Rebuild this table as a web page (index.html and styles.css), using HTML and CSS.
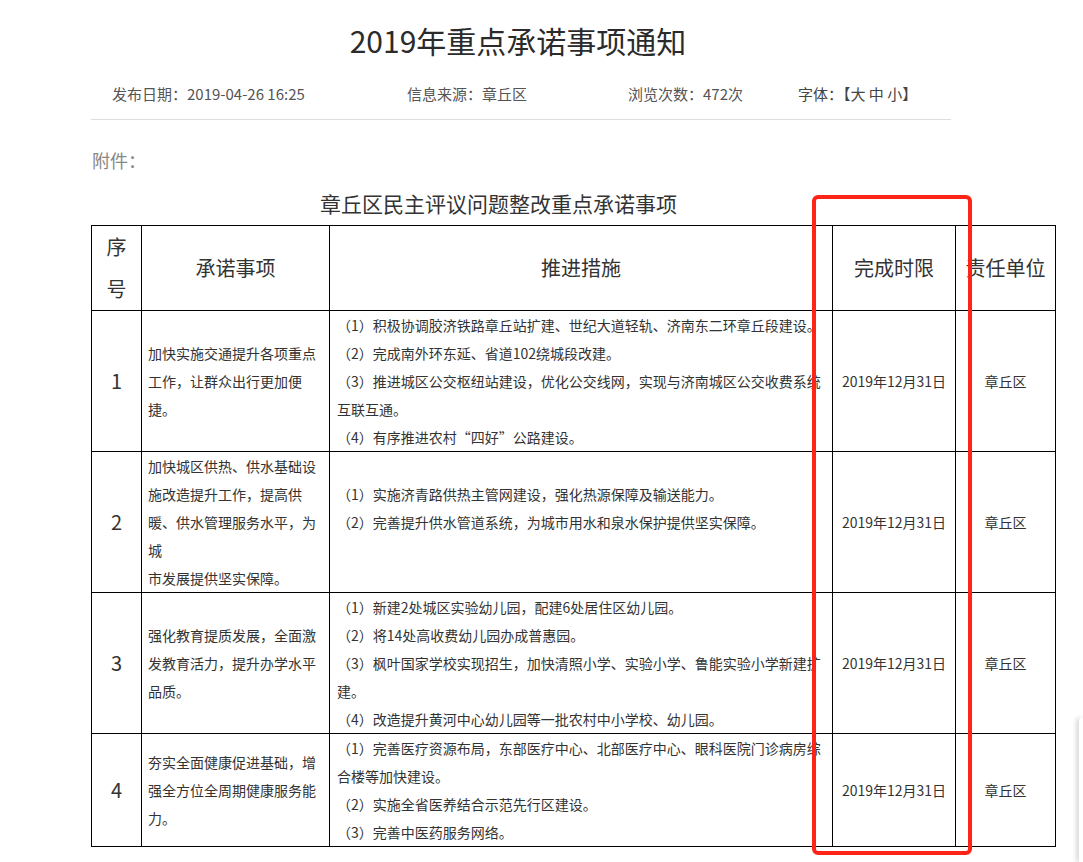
FILE: index.html
```html
<!DOCTYPE html>
<html lang="zh-CN">
<head>
<meta charset="utf-8">
<title>2019年重点承诺事项通知</title>
<link rel="stylesheet" href="styles.css">
</head>
<body>
<div class="page">
  <h1 class="title">2019年重点承诺事项通知</h1>
  <div class="meta">
    <span class="meta-item m-date">发布日期：2019-04-26 16:25</span>
    <span class="meta-item m-source">信息来源：章丘区</span>
    <span class="meta-item m-views">浏览次数：472次</span>
    <span class="meta-item m-font">字体：【大 中 小】</span>
  </div>
  <p class="attach">附件：</p>
  <p class="table-title">章丘区民主评议问题整改重点承诺事项</p>
  <table class="grid">
    <colgroup>
      <col class="c1"><col class="c2"><col class="c3"><col class="c4"><col class="c5">
    </colgroup>
    <thead>
      <tr class="head">
        <th class="seq-head">序<br>号</th>
        <th>承诺事项</th>
        <th>推进措施</th>
        <th>完成时限</th>
        <th>责任单位</th>
      </tr>
    </thead>
    <tbody>
      <tr>
        <td class="num">1</td>
        <td class="item">加快实施交通提升各项重点<br>工作，让群众出行更加便<br>捷。</td>
        <td class="measure">（1）积极协调胶济铁路章丘站扩建、世纪大道轻轨、济南东二环章丘段建设。<br>（2）完成南外环东延、省道102绕城段改建。<br>（3）推进城区公交枢纽站建设，优化公交线网，实现与济南城区公交收费系统<br>互联互通。<br>（4）有序推进农村“四好”公路建设。</td>
        <td class="date">2019年12月31日</td>
        <td class="unit">章丘区</td>
      </tr>
      <tr>
        <td class="num">2</td>
        <td class="item">加快城区供热、供水基础设<br>施改造提升工作，提高供<br>暖、供水管理服务水平，为<br>城<br>市发展提供坚实保障。</td>
        <td class="measure">（1）实施济青路供热主管网建设，强化热源保障及输送能力。<br>（2）完善提升供水管道系统，为城市用水和泉水保护提供坚实保障。<br>&nbsp;</td>
        <td class="date">2019年12月31日</td>
        <td class="unit">章丘区</td>
      </tr>
      <tr>
        <td class="num">3</td>
        <td class="item">强化教育提质发展，全面激<br>发教育活力，提升办学水平<br>品质。</td>
        <td class="measure">（1）新建2处城区实验幼儿园，配建6处居住区幼儿园。<br>（2）将14处高收费幼儿园办成普惠园。<br>（3）枫叶国家学校实现招生，加快清照小学、实验小学、鲁能实验小学新建扩<br>建。<br>（4）改造提升黄河中心幼儿园等一批农村中小学校、幼儿园。</td>
        <td class="date">2019年12月31日</td>
        <td class="unit">章丘区</td>
      </tr>
      <tr>
        <td class="num">4</td>
        <td class="item">夯实全面健康促进基础，增<br>强全方位全周期健康服务能<br>力。</td>
        <td class="measure">（1）完善医疗资源布局，东部医疗中心、北部医疗中心、眼科医院门诊病房综<br>合楼等加快建设。<br>（2）实施全省医养结合示范先行区建设。<br>（3）完善中医药服务网络。</td>
        <td class="date">2019年12月31日</td>
        <td class="unit">章丘区</td>
      </tr>
    </tbody>
  </table>
</div>
<div class="highlight"></div>
<div class="float-panel"></div>
</body>
</html>
```

FILE: styles.css
```css
html, body {
  margin: 0;
  padding: 0;
  overflow: hidden;
  background: #fff;
}
body {
  font-family: "Noto Sans CJK SC", "Noto Sans", sans-serif;
  color: #333;
  position: relative;
  height: 862px;
}
.page {
  width: 860px;
  margin-left: 91px;
  padding-top: 20px;
}
.title {
  margin: 0;
  font-size: 30px;
  line-height: 40px;
  font-weight: normal;
  text-align: center;
  color: #2b2b2b;
  padding-right: 6px;
}
.meta {
  display: flex;
  margin-top: 24px;
  padding-left: 21px;
  padding-bottom: 15px;
  border-bottom: 1px solid #dedede;
  font-size: 15px;
  line-height: 20px;
  color: #555;
  white-space: nowrap;
}
.m-date { width: 295px; }
.m-source { width: 221px; }
.m-views { width: 170px; }
.m-font { color: #444; }
.attach {
  margin: 28px 0 0 1px;
  font-size: 18px;
  line-height: 24px;
  color: #888;
}
.table-title {
  margin: 17px 0 0 0;
  padding-left: 229px;
  font-size: 21px;
  line-height: 28px;
  color: #333;
  white-space: nowrap;
}
.grid {
  margin-top: 8px;
  border-collapse: collapse;
  table-layout: fixed;
  width: 965px;
  font-size: 14px;
  line-height: 28px;
  color: #333;
}
.c1 { width: 50px; }
.c2 { width: 188px; }
.c3 { width: 503px; }
.c4 { width: 123px; }
.c5 { width: 100px; }
.grid th, .grid td {
  border: 1px solid #000;
  padding: 0;
  vertical-align: middle;
}
.grid th {
  height: 84px;
  font-size: 20px;
  font-weight: normal;
  line-height: 28px;
  text-align: center;
  white-space: nowrap;
}
.grid th.seq-head {
  line-height: 42px;
}
.num {
  text-align: center;
  font-size: 20px;
}
.item {
  padding: 0 4px 0 6px !important;
  white-space: nowrap;
}
.measure {
  padding: 0 4px 0 7px !important;
  white-space: nowrap;
}
.date, .unit {
  text-align: center;
  white-space: nowrap;
}
.highlight {
  position: absolute;
  left: 812px;
  top: 195px;
  width: 152px;
  height: 652px;
  border: 4px solid #ff2418;
  border-radius: 6px;
}
.float-panel {
  position: absolute;
  left: 1079px;
  top: 718px;
  width: 4px;
  height: 144px;
  background: #fff;
  box-shadow: -2px 0 5px rgba(0, 0, 0, 0.22);
  border-radius: 3px 0 0 0;
}
```
